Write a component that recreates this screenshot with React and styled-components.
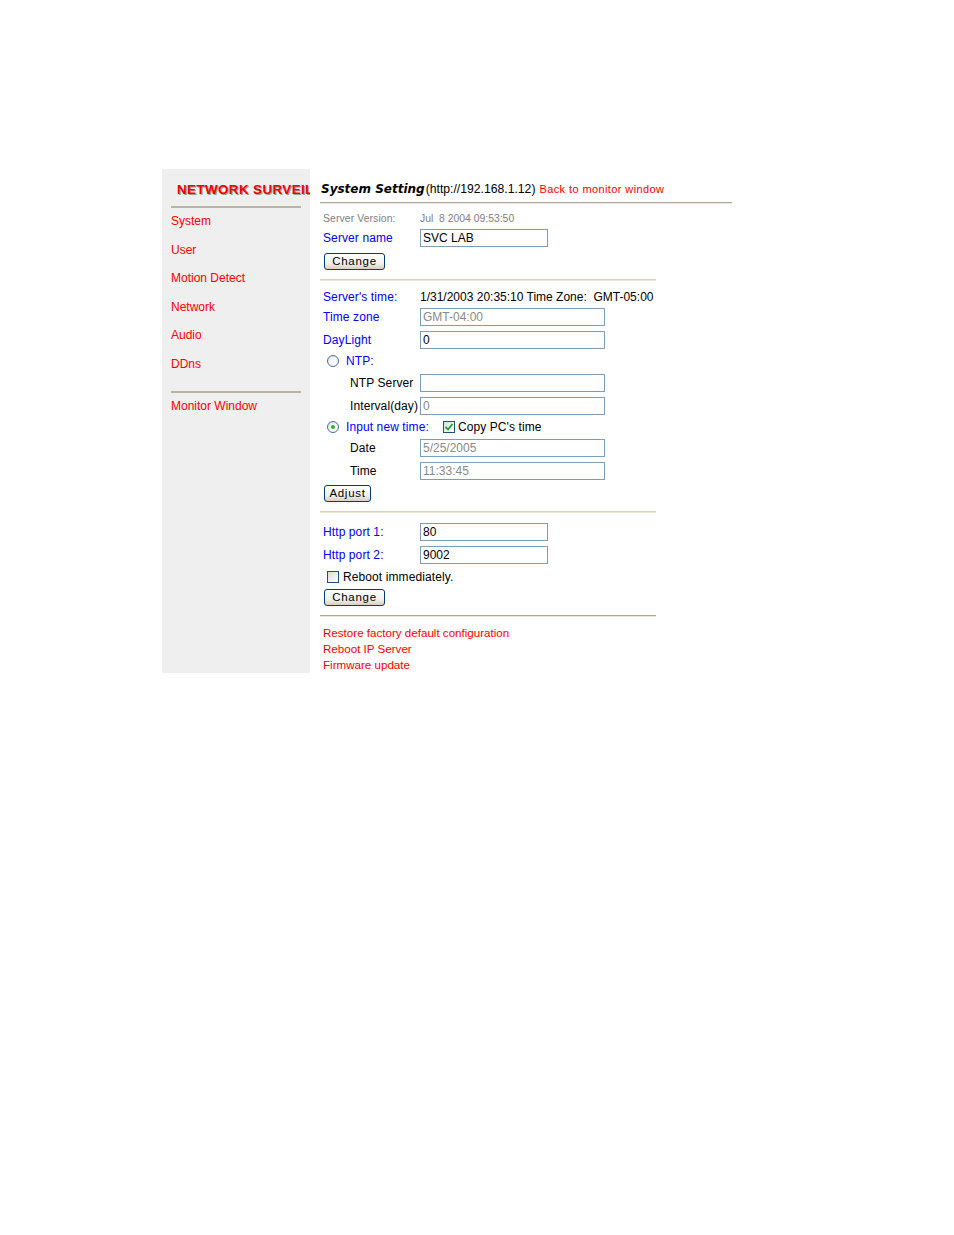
import React from 'react';
import styled, { createGlobalStyle } from 'styled-components';

const Global = createGlobalStyle`
  html, body { margin: 0; padding: 0; background: #fff; }
  body { font-family: "Liberation Sans", Arial, sans-serif; font-size: 12px; color: #000; }
`;

const Page = styled.div`
  display: flex;
  align-items: stretch;
  padding: 169px 0 0 162px;
  width: max-content;
`;

const Sidebar = styled.nav`
  width: 148px;
  box-sizing: border-box;
  padding: 0 9px;
  background: #efefef;
  overflow: hidden;
  display: flex;
  flex-direction: column;
`;

const Brand = styled.div`
  margin: 13px 0 0 6px;
  white-space: nowrap;
  font: bold 13.4px/16px "Liberation Sans", Arial, sans-serif;
  letter-spacing: 0.4px;
  color: #ee0000;
  text-shadow: 1px 1px 0 #9a9a9a;
`;

const SideRule = styled.div`
  height: 0;
  border-top: 2px solid #b8b3a3;
  margin-top: ${p => p.$mt}px;
`;

const MenuList = styled.div`
  display: flex;
  flex-direction: column;
  gap: 14.6px;
  margin-top: ${p => p.$mt}px;
`;

const MenuLink = styled.a`
  display: block;
  color: #ff0000;
  font-size: 12px;
  line-height: 14px;
  text-decoration: none;
  white-space: nowrap;
`;

const Main = styled.main`
  width: 412px;
  margin-left: 10px;
  display: flex;
  flex-direction: column;
`;

const TitleRow = styled.div`
  padding: 13px 0 0 1px;
  line-height: 14px;
  white-space: nowrap;
`;

const Title = styled.span`
  font: italic bold 12px/14px "DejaVu Sans", Verdana, sans-serif;
  margin-right: 1px;
`;

const TitleUrl = styled.span`
  font-size: 12.2px;
`;

const TitleLink = styled.a`
  color: #ff0000;
  font-size: 11px;
  letter-spacing: 0.4px;
  text-decoration: none;
  margin-left: 4px;
`;

const Rule = styled.div`
  height: 0;
  width: ${p => p.$w}px;
  margin-top: ${p => p.$mt}px;
  border-top: 1px solid ${p => (p.$soft ? '#d4d0c2' : '#aca899')};
  border-bottom: 1px solid #ece9d8;
`;

const Section = styled.div`
  display: flex;
  flex-direction: column;
  padding-left: 3px;
`;

const FieldRow = styled.div`
  display: grid;
  grid-template-columns: 97px auto;
  align-items: center;
  height: ${p => p.$h}px;
  margin-top: ${p => p.$mt}px;
  white-space: nowrap;
`;

const tones = { blue: '#0000ff', black: '#000', gray: '#808080' };

const Label = styled.span`
  color: ${p => tones[p.$tone || 'black']};
  font-size: ${p => p.$size || 12}px;
  padding-left: ${p => p.$indent || 0}px;
  letter-spacing: 0.1px;
  white-space: pre;
`;

const Value = styled.span`
  color: ${p => tones[p.$tone || 'black']};
  font-size: ${p => p.$size || 12}px;
  white-space: pre;
`;

const TextInput = styled.input`
  box-sizing: border-box;
  width: ${p => p.$w}px;
  height: 18px;
  margin: 0;
  padding: 0 2px;
  border: 1px solid #7f9db9;
  background: #fff;
  font: 12px "Liberation Sans", Arial, sans-serif;
  color: ${p => (p.$muted ? '#8a8a8a' : '#000')};
  outline: none;
`;

const Button = styled.button`
  box-sizing: border-box;
  width: ${p => p.$w}px;
  height: 17px;
  margin: ${p => p.$mt}px 0 0 1px;
  padding: 0;
  border: 1px solid #003c74;
  border-radius: 3px;
  background: linear-gradient(#ffffff, #f3f2ec 60%, #d6d0c5);
  font: 11.5px/15px "Liberation Sans", Arial, sans-serif;
  letter-spacing: 0.7px;
  color: #000;
  align-self: flex-start;
`;

const OptionRow = styled.div`
  display: flex;
  align-items: center;
  height: 16px;
  margin-top: ${p => p.$mt}px;
  padding-left: 4px;
  white-space: nowrap;
`;

const Radio = styled.span`
  position: relative;
  box-sizing: border-box;
  width: 12px;
  height: 12px;
  border-radius: 50%;
  border: 1px solid #4a6f98;
  background: radial-gradient(circle at 60% 65%, #ffffff 20%, #dcdcd4 100%);
  margin-right: 7px;
  flex: none;
  &::after {
    content: '';
    display: ${p => (p.$checked ? 'block' : 'none')};
    position: absolute;
    left: 3px;
    top: 3px;
    width: 4px;
    height: 4px;
    border-radius: 50%;
    background: #2fae35;
  }
`;

const Box = styled.span`
  box-sizing: border-box;
  width: 12px;
  height: 12px;
  border: 1px solid #1c5180;
  background: linear-gradient(135deg, #dcdcd7, #ffffff);
  margin: 0 ${p => p.$gap}px 0 ${p => p.$left || 0}px;
  display: inline-flex;
  align-items: center;
  justify-content: center;
  flex: none;
`;

const LinkList = styled.div`
  display: flex;
  flex-direction: column;
  margin-top: 8px;
`;

const RedLink = styled.a`
  color: #ff0000;
  font-size: 11.6px;
  line-height: 16px;
  text-decoration: none;
  white-space: nowrap;
`;

const Check = () => (
  <svg width="10" height="10" viewBox="0 0 10 10">
    <path d="M1.5 5 L4 7.5 L8.5 2" fill="none" stroke="#21a121" strokeWidth="1.8" />
  </svg>
);

const menu = ['System', 'User', 'Motion Detect', 'Network', 'Audio', 'DDns'];

export default function App() {
  return (
    <>
      <Global />
      <Page>
        <Sidebar>
          <Brand>NETWORK SURVEILLANCE</Brand>
          <SideRule $mt={8} />
          <MenuList $mt={6}>
            {menu.map(m => (
              <MenuLink key={m} href="#">{m}</MenuLink>
            ))}
          </MenuList>
          <SideRule $mt={20} />
          <MenuList $mt={6}>
            <MenuLink href="#">Monitor Window</MenuLink>
          </MenuList>
        </Sidebar>

        <Main>
          <TitleRow>
            <Title>System Setting</Title>
            <TitleUrl>(http://192.168.1.12)</TitleUrl>
            <TitleLink href="#">Back to monitor window</TitleLink>
          </TitleRow>
          <Rule $w={412} $mt={6} />

          <Section>
            <FieldRow $h={14} $mt={7}>
              <Label $tone="gray" $size={10.4}>Server Version:</Label>
              <Value $tone="gray" $size={10.4}>{'Jul  8 2004 09:53:50'}</Value>
            </FieldRow>
            <FieldRow $h={18} $mt={4}>
              <Label $tone="blue">Server name</Label>
              <TextInput $w={128} defaultValue="SVC LAB" />
            </FieldRow>
            <Button $w={61} $mt={6}>Change</Button>
          </Section>
          <Rule $w={336} $mt={9} $soft />

          <Section>
            <FieldRow $h={16} $mt={8}>
              <Label $tone="blue">Server's time:</Label>
              <Value>1/31/2003 20:35:10 Time Zone:  GMT-05:00</Value>
            </FieldRow>
            <FieldRow $h={18} $mt={3}>
              <Label $tone="blue">Time zone</Label>
              <TextInput $w={185} $muted readOnly defaultValue="GMT-04:00" />
            </FieldRow>
            <FieldRow $h={18} $mt={5}>
              <Label $tone="blue">DayLight</Label>
              <TextInput $w={185} defaultValue="0" />
            </FieldRow>
            <OptionRow $mt={4}>
              <Radio />
              <Label $tone="blue">NTP:</Label>
            </OptionRow>
            <FieldRow $h={18} $mt={5}>
              <Label $indent={27}>NTP Server</Label>
              <TextInput $w={185} defaultValue="" />
            </FieldRow>
            <FieldRow $h={18} $mt={5}>
              <Label $indent={27}>Interval(day)</Label>
              <TextInput $w={185} $muted readOnly defaultValue="0" />
            </FieldRow>
            <OptionRow $mt={4}>
              <Radio $checked />
              <Label $tone="blue">Input new time:</Label>
              <Box $left={14} $gap={3}><Check /></Box>
              <Label>Copy PC's time</Label>
            </OptionRow>
            <FieldRow $h={18} $mt={4}>
              <Label $indent={27}>Date</Label>
              <TextInput $w={185} $muted readOnly defaultValue="5/25/2005" />
            </FieldRow>
            <FieldRow $h={18} $mt={5}>
              <Label $indent={27}>Time</Label>
              <TextInput $w={185} $muted readOnly defaultValue="11:33:45" />
            </FieldRow>
            <Button $w={47} $mt={5}>Adjust</Button>
          </Section>
          <Rule $w={336} $mt={9} $soft />

          <Section>
            <FieldRow $h={18} $mt={10}>
              <Label $tone="blue">Http port 1:</Label>
              <TextInput $w={128} defaultValue="80" />
            </FieldRow>
            <FieldRow $h={18} $mt={5}>
              <Label $tone="blue">Http port 2:</Label>
              <TextInput $w={128} defaultValue="9002" />
            </FieldRow>
            <OptionRow $mt={5}>
              <Box $gap={4} />
              <Label>Reboot immediately.</Label>
            </OptionRow>
            <Button $w={61} $mt={4}>Change</Button>
          </Section>
          <Rule $w={336} $mt={9} />

          <Section>
            <LinkList>
              <RedLink href="#">Restore factory default configuration</RedLink>
              <RedLink href="#">Reboot IP Server</RedLink>
              <RedLink href="#">Firmware update</RedLink>
            </LinkList>
          </Section>
        </Main>
      </Page>
    </>
  );
}
